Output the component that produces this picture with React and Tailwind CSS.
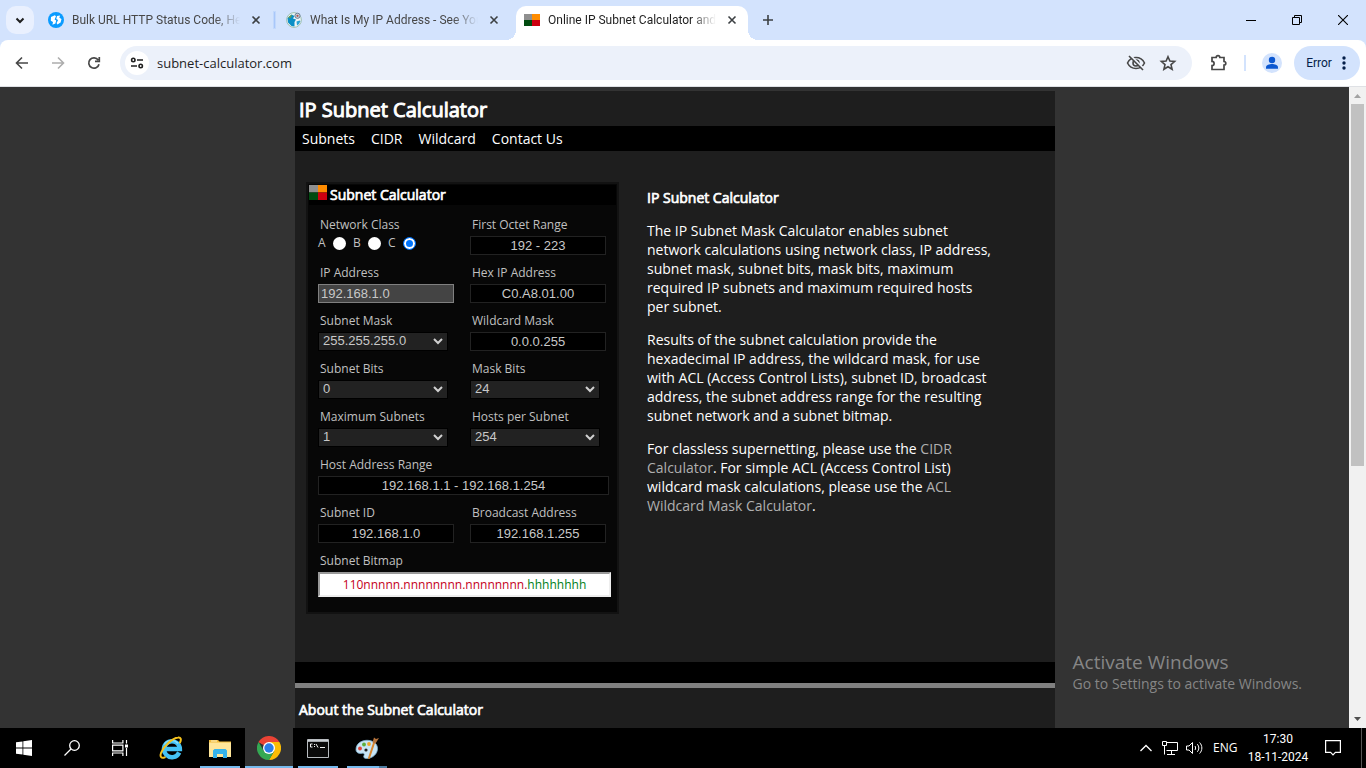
import React from "react";

const ui = "font-['Open_Sans','Noto_Sans',sans-serif]";

/* ---------- small drawings ---------- */
function QuadMark({ className }) {
  return (
    <svg viewBox="0 0 16 12" preserveAspectRatio="none" className={className} aria-hidden="true">
      <path fill="#8f8f8f" d="M0 0h8v6H0z" />
      <path fill="#ff8c00" d="M8 0h8v6H8z" />
      <path fill="#004b10" d="M0 6h8v6H0z" />
      <path fill="#cc0010" d="M8 6h8v6H8z" />
    </svg>
  );
}

function Cross() {
  return (
    <svg viewBox="0 0 16 16" className="size-4" fill="none" stroke="#3c4043" strokeWidth="1.6" aria-hidden="true">
      <path d="M4.5 4.5l7 7M11.5 4.5l-7 7" />
    </svg>
  );
}

function HttpMark() {
  return (
    <svg viewBox="0 0 16 16" className="size-4" aria-hidden="true">
      <circle cx="8" cy="8" r="8" fill="#0a9bff" />
      <path fill="#fff" d="M3 5l3.800-1.800L8 4.300 6.600 7.500l1.600 1-.8 3-3 1.300L5 10 2.800 8.700z" />
      <path fill="#fff" d="M9 4l3-.6-.6 2.300L13.500 7l-.9 3.600-3.200 1.800L8.600 11l1.500-3-1.800-.9z" />
    </svg>
  );
}

function GlobeMark() {
  return (
    <svg viewBox="0 0 16 16" className="size-4" aria-hidden="true">
      <circle cx="8" cy="8" r="7.400" fill="#eef4f6" stroke="#8fb5a0" strokeWidth=".8" />
      <path fill="#0b8fc6" d="M1.500 6l4-3.500 3 1.500L7 6.500l3 1-1.500 2.500v4.500l-3-.5L2 10.500z" />
      <path fill="#2aa3d4" d="M10.500 9.500l3-1 1 .5-1.500 3-2 1.500z" />
      <path fill="#6d9c4a" d="M3 4.500l3-2-1 3-2.500 1z" />
      <circle cx="11.500" cy="3.800" r="2.600" fill="#c9d3dc" stroke="#6d7f96" />
      <circle cx="11.500" cy="3.800" r="1.100" fill="#b5524b" />
    </svg>
  );
}

const strip = "fill-none stroke-current";

/* ---------- browser chrome ---------- */
function Tab({ icon, title, active }) {
  return (
    <div className={active ? "relative mt-1.5 flex h-[34px] w-[232px] items-center rounded-t-[10px] bg-white pl-2 pr-2 pb-1.5" : "flex h-10 w-[238px] items-center pl-2 pr-3.5"}>
      {active && (
        <>
          <span className="absolute bottom-0 -left-2.5 size-2.5 bg-[radial-gradient(circle_at_0_0,transparent_10px,#fff_10px)]" />
          <span className="absolute bottom-0 -right-2.5 size-2.5 bg-[radial-gradient(circle_at_100%_0,transparent_10px,#fff_10px)]" />
        </>
      )}
      {icon}
      <span className={`${active ? "text-[#1f1f1f]" : "text-[#474747]"} ml-2 min-w-0 flex-1 overflow-hidden whitespace-nowrap font-[Roboto,'Open_Sans',sans-serif] text-[12px] leading-4 [mask-image:linear-gradient(to_right,#000_85%,transparent)]`}>
        {title}
      </span>
      <button aria-label="Close tab" className="ml-2 flex size-4 items-center justify-center"><Cross /></button>
    </div>
  );
}

function TabStrip() {
  return (
    <div className="flex h-10 shrink-0 bg-[#d3e3fd]">
      <button aria-label="Search tabs" className="mt-1.5 ml-1.5 flex size-7 items-center justify-center rounded-[10px] bg-[#e9f0fe]">
        <svg viewBox="0 0 16 16" className={`size-4 ${strip} text-[#1f1f1f]`} strokeWidth="2" aria-hidden="true"><path d="M4.500 6.500L8 10l3.500-3.500" /></svg>
      </button>
      <div className="ml-1.5 flex">
        <Tab icon={<HttpMark />} title="Bulk URL HTTP Status Code, He" />
        <div className="flex">
          <span className="-ml-1 mt-3 mr-[3px] h-4 w-px shrink-0 bg-[#a8c7fa] outline outline-[#a8c7fa]/40" />
          <Tab icon={<GlobeMark />} title="What Is My IP Address - See You" />
        </div>
        <Tab active icon={<QuadMark className="h-3 w-4" />} title="Online IP Subnet Calculator and" />
      </div>
      <button aria-label="New tab" className="ml-3 flex w-4 items-center">
        <svg viewBox="0 0 16 16" className={`size-4 ${strip} text-[#3c4043]`} strokeWidth="1.600" aria-hidden="true"><path d="M8 3v10M3 8h10" /></svg>
      </button>
      <div className="ml-auto flex text-black">
        <button aria-label="Minimize" className="flex w-[46px] items-center justify-center">
          <svg viewBox="0 0 10 10" className={`size-2.5 ${strip}`} aria-hidden="true"><path d="M0 5.500h10" /></svg>
        </button>
        <button aria-label="Restore" className="flex w-[46px] items-center justify-center">
          <svg viewBox="0 0 10 10" className={`size-2.5 ${strip}`} aria-hidden="true"><path d="M.5 2.500h7v7h-7zM2.500 2.500v-2h7v7h-2" /></svg>
        </button>
        <button aria-label="Close" className="flex w-[46px] items-center justify-center">
          <svg viewBox="0 0 10 10" className={`size-2.5 ${strip}`} strokeWidth="1.100" aria-hidden="true"><path d="M0 0l10 10M10 0L0 10" /></svg>
        </button>
      </div>
    </div>
  );
}

function Toolbar() {
  return (
    <div className="shrink-0 bg-[#d3e3fd]">
      <div className="flex h-[47px] items-center rounded-t-[8px] border-b border-[#dfe1e5] bg-white pr-1.5 text-[#474747]">
        <button aria-label="Back" className="ml-3.5 flex size-4 items-center justify-center">
          <svg viewBox="0 0 16 16" className={`size-4 ${strip}`} strokeWidth="1.600" aria-hidden="true"><path d="M14 8H3M8 2.500L2.500 8 8 13.500" /></svg>
        </button>
        <button aria-label="Forward" className="ml-5 flex size-4 items-center justify-center text-[#adadad]">
          <svg viewBox="0 0 16 16" className={`size-4 ${strip}`} strokeWidth="1.600" aria-hidden="true"><path d="M2 8h11M8 2.500L13.500 8 8 13.500" /></svg>
        </button>
        <button aria-label="Reload" className="ml-5 flex size-4 items-center justify-center">
          <svg viewBox="0 0 16 16" className={`size-4 ${strip}`} strokeWidth="1.700" aria-hidden="true"><path d="M13 9.200A5.200 5.200 0 1 1 12.200 5M13.300 2v4.300H9" /></svg>
        </button>
        <div className="ml-[18px] flex h-[34px] min-w-0 flex-1 items-center rounded-full bg-[#ecf1fa] pl-[5px] pr-3.5">
          <button aria-label="View site information" className="flex size-6 items-center justify-center rounded-full bg-white text-[#1f1f1f]">
            <svg viewBox="0 0 16 16" className={`size-4 ${strip}`} strokeWidth="1.600" aria-hidden="true"><circle cx="4.300" cy="5" r="1.700" /><path d="M8 5h6M2 11h6" /><circle cx="11.700" cy="11" r="1.700" /></svg>
          </button>
          <input aria-label="Address" readOnly defaultValue="subnet-calculator.com" className="ml-2 min-w-0 flex-1 bg-transparent pt-px text-[13px] text-[#1f1f1f] outline-none" />
          <button aria-label="Third-party cookies blocked" className="flex size-5 items-center justify-center">
            <svg viewBox="0 0 20 20" className={`size-5 ${strip}`} strokeWidth="1.600" aria-hidden="true"><path d="M1.500 10C3.200 6.500 6.300 4.500 10 4.500s6.800 2 8.500 5.500c-1.700 3.500-4.800 5.500-8.500 5.500S3.200 13.500 1.500 10z" /><circle cx="10" cy="10" r="3" /><path stroke="#ecf1fa" strokeWidth="2" d="M4.500 2.500l13 13" /><path d="M3 3l14 14" /></svg>
          </button>
          <button aria-label="Bookmark this tab" className="ml-3 flex size-5 items-center justify-center">
            <svg viewBox="0 0 20 20" className={`size-5 ${strip}`} strokeWidth="1.600" aria-hidden="true"><path d="M10 3.700l1.900 4.400 4.700.4-3.600 3.100 1.100 4.600L10 13.700l-4.100 2.500L7 11.600 3.400 8.500l4.700-.4z" /></svg>
          </button>
        </div>
        <button aria-label="Extensions" className="ml-4 flex size-5 items-center justify-center">
          <svg viewBox="0 0 20 20" className={`size-5 ${strip}`} strokeWidth="1.700" aria-hidden="true"><path d="M4 4.500h4.200a1.800 1.800 0 0 1 3.600 0H16v4a1.800 1.800 0 0 1 0 3.600v4.400H4v-4a1.900 1.900 0 0 0 0-4.200z" /></svg>
        </button>
        <span className="ml-4 h-4 w-0.5 bg-[#d3e3fd]" />
        <button aria-label="Profile" className="ml-4 flex size-5 items-center justify-center rounded-full bg-[#d3e3fd]">
          <svg viewBox="0 0 20 20" className="size-5 fill-[#0b57d0]" aria-hidden="true"><circle cx="10" cy="7" r="3.200" /><path d="M4 15.800v-1.600c0-2 3.500-3.200 6-3.200s6 1.200 6 3.200v1.600z" /></svg>
        </button>
        <button className="ml-3 flex h-[34px] items-center rounded-full bg-[#d3e3fd] pl-3 pr-2 font-[Roboto,'Open_Sans',sans-serif] text-[12px] text-[#041e49]">
          <span className="w-[26px]">Error</span>
          <svg viewBox="0 0 16 16" className="ml-1 size-4 fill-[#041e49]" aria-hidden="true"><circle cx="8" cy="3" r="1.700" /><circle cx="8" cy="8" r="1.700" /><circle cx="8" cy="13" r="1.700" /></svg>
        </button>
      </div>
    </div>
  );
}

/* ---------- calculator ---------- */
const labelCls = "mb-0.5 ml-0.5 block text-[12px] leading-[18px] text-[#c0c0c0]";
const fieldText = "font-['Liberation_Sans',Arial,sans-serif] text-[13px] text-[#c8c8c8]";

function Output({ id, label, value, wide }) {
  return (
    <div className={wide ? "col-span-2 h-12" : "h-12"}>
      <label htmlFor={id} className={labelCls}>{label}</label>
      <input id={id} readOnly defaultValue={value} className={`${wide ? "w-[291px]" : "w-[136px]"} ${fieldText} block h-[19px] border border-[#222] bg-black pb-px text-center outline-none`} />
    </div>
  );
}

function Pick({ id, label, options, value }) {
  return (
    <div className="h-12">
      <label htmlFor={id} className={labelCls}>{label}</label>
      <div className="relative w-[130px]">
        <select id={id} defaultValue={value} className={`${fieldText} block h-[19px] w-full appearance-none border border-black bg-[#222] pb-0.5 pl-1 leading-4 outline-none`}>
          {options.map((o) => <option key={o}>{o}</option>)}
        </select>
        <svg viewBox="0 0 10 8" className="pointer-events-none absolute top-[5px] right-[5px] h-2 w-2.5 fill-none stroke-[#d0d0d0]" strokeWidth="2" aria-hidden="true"><path d="M1 2l4 4 4-4" /></svg>
      </div>
    </div>
  );
}

function Calculator() {
  return (
    <form className="w-[313px] shrink-0 border-2 border-[#121212] bg-[#070707] pb-[15px]">
      <div className="mx-px mt-px flex h-5 bg-black">
        <QuadMark className="h-[15px] w-[18px]" />
        <h2 className="ml-[3px] text-[14px] leading-5 font-normal text-white [-webkit-text-stroke:0.7px_#fff]">Subnet Calculator</h2>
      </div>
      <div className="ml-2.5 mt-[11px] grid grid-cols-[152px_136px]">
        <fieldset className="h-12">
          <legend className={labelCls}>Network Class</legend>
          <div className="-mt-px flex items-center text-[12px] leading-4 text-[#c0c0c0]">
            {["A", "B", "C"].map((c) => (
              <label key={c} className="flex w-[35px] items-center justify-between pr-[7px]">
                {c}
                <input type="radio" name="class" defaultChecked={c === "C"} className="size-[13px] appearance-none rounded-full bg-white checked:border checked:border-[#0075ff] checked:bg-[#0075ff] checked:shadow-[inset_0_0_0_2px_#fff]" />
              </label>
            ))}
          </div>
        </fieldset>
        <Output id="octet" label="First Octet Range" value="192 - 223" />
        <div className="h-12">
          <label htmlFor="ip" className={labelCls}>IP Address</label>
          <input id="ip" defaultValue="192.168.1.0" className={`${fieldText} block h-[19px] w-[136px] border border-[#808080] bg-[#444] pl-0.5 outline-none`} />
        </div>
        <Output id="hex" label="Hex IP Address" value="C0.A8.01.00" />
        <Pick id="mask" label="Subnet Mask" value="255.255.255.0" options={["255.255.255.0", "255.255.255.128", "255.255.255.192"]} />
        <Output id="wild" label="Wildcard Mask" value="0.0.0.255" />
        <Pick id="sbits" label="Subnet Bits" value="0" options={["0", "1", "2"]} />
        <Pick id="mbits" label="Mask Bits" value="24" options={["24", "25", "26"]} />
        <Pick id="msub" label="Maximum Subnets" value="1" options={["1", "2", "4"]} />
        <Pick id="hosts" label="Hosts per Subnet" value="254" options={["254", "126", "62"]} />
        <Output id="range" label="Host Address Range" value="192.168.1.1 - 192.168.1.254" wide />
        <Output id="sid" label="Subnet ID" value="192.168.1.0" />
        <Output id="bcast" label="Broadcast Address" value="192.168.1.255" />
        <div className="col-span-2">
          <label htmlFor="bitmap" className={labelCls}>Subnet Bitmap</label>
          <output id="bitmap" className="block h-[25px] w-[293px] border-2 border-t-[#999] border-r-[#eee] border-b-[#eee] border-l-[#999] bg-white text-center text-[12px] leading-[22px]">
            <span className="text-[#c4001a]">110nnnnn.nnnnnnnn.nnnnnnnn.</span>
            <span className="text-[#008020]">hhhhhhhh</span>
          </output>
        </div>
      </div>
    </form>
  );
}

const heading = "text-[14px] leading-[19px] font-normal [-webkit-text-stroke:0.7px_#fff]";

function Page() {
  return (
    <div className="relative flex min-h-0 flex-1 overflow-hidden bg-[#333]">
      <main className="h-full min-w-0 flex-1 overflow-hidden pt-1 pl-px">
        <div className="mx-auto min-h-full max-w-[760px] bg-[#1e1e1e] text-[14px] leading-[19px] text-white">
          <h1 className="h-[35px] pt-1 pl-1 text-[20px] leading-[30px] font-normal [-webkit-text-stroke:1px_#fff]">IP Subnet Calculator</h1>
          <nav className="flex h-[25px] items-center gap-4 bg-black pl-[7px]">
            <a href="#subnets">Subnets</a>
            <a href="#cidr">CIDR</a>
            <a href="#wildcard">Wildcard</a>
            <a href="#contact">Contact Us</a>
          </nav>
          <div className="flex items-start pt-[31px] pr-[60px] pb-12 pl-[11px]">
            <Calculator />
            <section className="ml-7 flex w-[350px] flex-col gap-3.5 pt-1.5">
              <h2 className={heading}>IP Subnet Calculator</h2>
              <p>The IP Subnet Mask Calculator enables subnet network calculations using network class, IP address, subnet mask, subnet bits, mask bits, maximum required IP subnets and maximum required hosts per subnet.</p>
              <p>Results of the subnet calculation provide the hexadecimal IP address, the wildcard mask, for use with ACL (Access Control Lists), subnet ID, broadcast address, the subnet address range for the resulting subnet network and a subnet bitmap.</p>
              <p>For classless supernetting, please use the <a href="#cidr" className="text-[#b0b0b0]">CIDR Calculator</a>. For simple ACL (Access Control List) wildcard mask calculations, please use the <a href="#acl" className="text-[#b0b0b0]">ACL Wildcard Mask Calculator</a>.</p>
            </section>
          </div>
          <div className="h-[26px] border-b-5 border-[#808080] bg-black" />
          <h2 className={`${heading} px-1 pt-3 pb-4`}>About the Subnet Calculator</h2>
        </div>
      </main>
      <div className="flex w-[17px] shrink-0 flex-col items-center bg-[#f1f1f1]">
        <svg viewBox="0 0 17 17" className="size-[17px] fill-[#a3a3a3]" aria-hidden="true"><path d="M5 11l3.500-4 3.500 4z" /></svg>
        <div className="h-[362px] w-[13px] bg-[#c1c1c1]" />
        <svg viewBox="0 0 17 17" className="mt-auto size-[17px] fill-[#505050]" aria-hidden="true"><path d="M5 6l3.500 4L12 6z" /></svg>
      </div>
      <div className="pointer-events-none absolute right-16 bottom-[34px] text-[#868686]">
        <p className="text-[19px] leading-6">Activate Windows</p>
        <p className="text-[14px] leading-5">Go to Settings to activate Windows.</p>
      </div>
    </div>
  );
}

/* ---------- taskbar ---------- */
function TaskItem({ label, tone, children }) {
  return (
    <button aria-label={label} className={tone === "active" ? "flex h-10 w-12 flex-col items-center bg-[#333]" : "flex h-10 w-12 flex-col items-center"}>
      <span className="flex h-[38px] items-center pt-0.5">{children}</span>
      {tone && <span className={tone === "active" ? "h-0.5 w-full bg-[#76b9ed]" : tone === "stacked" ? "h-0.5 w-10 border-r-8 border-[#4d7ca0] bg-[#76b9ed]" : "h-0.5 w-10 bg-[#76b9ed]"} />}
    </button>
  );
}

function Taskbar() {
  return (
    <footer className="flex h-10 shrink-0 bg-black text-[12px] text-white">
      <TaskItem label="Start">
        <svg viewBox="0 0 16 16" className="size-4 fill-white" aria-hidden="true"><path d="M0 2.300l6.500-.9v6.200H0zM7.300 1.300L16 0v7.600H7.300zM0 8.400h6.500v6.200L0 13.700zM7.300 8.400H16V16l-8.700-1.200z" /></svg>
      </TaskItem>
      <TaskItem label="Search">
        <svg viewBox="0 0 16 16" className={`size-4 ${strip}`} strokeWidth="1.300" aria-hidden="true"><circle cx="10.500" cy="5.500" r="4.800" /><path d="M7 9L.5 15.500" /></svg>
      </TaskItem>
      <TaskItem label="Task view">
        <svg viewBox="0 0 16 16" className={`size-4 ${strip}`} strokeWidth="1.200" aria-hidden="true"><path d="M.6 0v3h10.300V0M.6 16v-3h10.300v3M.6 5.100h10.300v5.700H.6zM14.500 0v3.500M14.500 8v8" /><path fill="#fff" stroke="none" d="M13 4.500h3v3h-3z" /></svg>
      </TaskItem>
      <div className="ml-[3px] flex gap-px">
        <TaskItem label="Internet Explorer">
          <svg viewBox="0 0 24 24" className="size-6" aria-hidden="true">
            <path fill="none" stroke="#45c3f5" strokeWidth="4.400" d="M20.200 16.500a8 8 0 1 1 .7-3.500H6" />
            <path fill="none" stroke="#8be0ff" strokeWidth="1.200" d="M5.200 8.500A8.500 8.500 0 0 1 19 7.500" />
            <path fill="none" stroke="#f6c21c" strokeWidth="2" strokeLinecap="round" d="M21 6.500c1.600-3.200.8-5.500-2-5C13.500 2.300 5 9.500 2.200 16.500c-1.600 4 0 6.400 3.600 4.800" />
          </svg>
        </TaskItem>
        <TaskItem label="File Explorer" tone="open">
          <svg viewBox="0 0 22 19" className="h-[19px] w-[22px]" aria-hidden="true">
            <path fill="#f0b93a" d="M0 1h9l1.500 1.500H22v2H0z" />
            <path fill="#ffe69a" d="M0 3.500h22V18H0z" />
            <path fill="#fff4c9" d="M2 1.500h6v1H2z" />
            <path fill="#36b3ea" d="M4 19v-7.500L5.500 10h11l1.500 1.500V19h-4v-4H8v4z" />
          </svg>
        </TaskItem>
        <TaskItem label="Google Chrome" tone="active">
          <svg viewBox="0 0 24 24" className="size-6" aria-hidden="true">
            <path fill="#ea4335" d="M12 12L1.600 6A12 12 0 0 1 22.400 6z" />
            <path fill="#fbbc04" d="M12 12V6h10.400A12 12 0 0 1 12 24l5.200-9z" />
            <path fill="#34a853" d="M1.600 6A12 12 0 0 0 12 24l5.200-9L12 12l-5.200 3z" />
            <path fill="#ea4335" d="M1.600 6A12 12 0 0 1 2.500 4.700L12 6 6.800 9z" />
            <circle cx="12" cy="12" r="6" fill="#fff" /><circle cx="12" cy="12" r="4.700" fill="#2b7de9" />
          </svg>
        </TaskItem>
        <TaskItem label="Command Prompt" tone="open">
          <svg viewBox="0 0 22 19" className="h-[19px] w-[22px]" aria-hidden="true">
            <path fill="#0a0a0a" stroke="#b8bcc0" d="M.5.500h21v18H.5z" /><path fill="#c9ced3" d="M1 1h20v1.800H1z" />
            <path fill="none" stroke="#f2f2f2" d="M5.500 5h-2v3h2M7.500 5v1M7.500 7v1M9 5l2 3.500M13 8.500h5" />
          </svg>
        </TaskItem>
        <TaskItem label="Paint" tone="stacked">
          <svg viewBox="0 0 24 24" className="size-6" aria-hidden="true">
            <path fill="#c8e4f5" stroke="#7fb2d2" strokeWidth=".8" d="M1 13.500C1 8 6 4.300 12 4.300c5.500 0 10.500 3 10.500 8.200 0 5.500-5 10-11 10-2 0-3.500-1-2.500-3 .8-1.500 0-2.500-1.500-2.300C4 17.800 1 17 1 13.500z" />
            <circle cx="5" cy="12.500" r="1.900" fill="#e0463a" /><circle cx="9" cy="8.500" r="1.900" fill="#5cae3c" /><circle cx="14" cy="8" r="1.900" fill="#f0a52a" /><circle cx="11" cy="14" r="1.600" fill="#222" />
            <path stroke="#d9872f" strokeWidth="2" strokeLinecap="round" d="M14 22l5-15" /><path fill="#b5733c" d="M17.500 6.500L19 1.500l2 1.500 3-1-3.500 5.500z" />
          </svg>
        </TaskItem>
      </div>
      <div className="ml-auto flex items-center">
        <svg viewBox="0 0 12 8" className={`h-2 w-3 ${strip}`} strokeWidth="1.300" aria-hidden="true"><path d="M.5 7L6 1.500 11.500 7" /></svg>
        <svg viewBox="0 0 16 14" className={`ml-2.5 h-3.5 w-4 ${strip}`} aria-hidden="true"><path d="M5 1.500h10.500v8H4.500M2.500 5v8.500M.5.500h4v4h-4zM9.500 9.500v4M5 13.500h8" /></svg>
        <svg viewBox="0 0 17 14" className={`ml-2 h-3.5 w-[17px] ${strip}`} aria-hidden="true"><path d="M.5 5v4H3l3.500 3.500v-11L3 5zM9 5c.8 1.200.8 2.800 0 4M11.300 3.200c2 2.200 2 5.400 0 7.600M13.600 1.500c3 3.200 3 7.800 0 11" /></svg>
        <span className="ml-2.5 w-6">ENG</span>
        <div className="ml-2.5 w-[62px] whitespace-nowrap text-center font-[Roboto,'Open_Sans',sans-serif] leading-[18px]"><p>17:30</p><p>18-11-2024</p></div>
        <svg viewBox="0 0 16 16" className={`ml-4 size-4 ${strip}`} strokeWidth="1.200" aria-hidden="true"><path d="M.6.600h14.800v11.800h-5L8 14.800l-2.400-2.400h-5z" /></svg>
        <span className="ml-5 mr-1 h-full w-px bg-[#555]" />
      </div>
    </footer>
  );
}

export default function App() {
  return (
    <div className={`flex h-screen flex-col overflow-hidden ${ui}`}>
      <TabStrip />
      <Toolbar />
      <Page />
      <Taskbar />
    </div>
  );
}
